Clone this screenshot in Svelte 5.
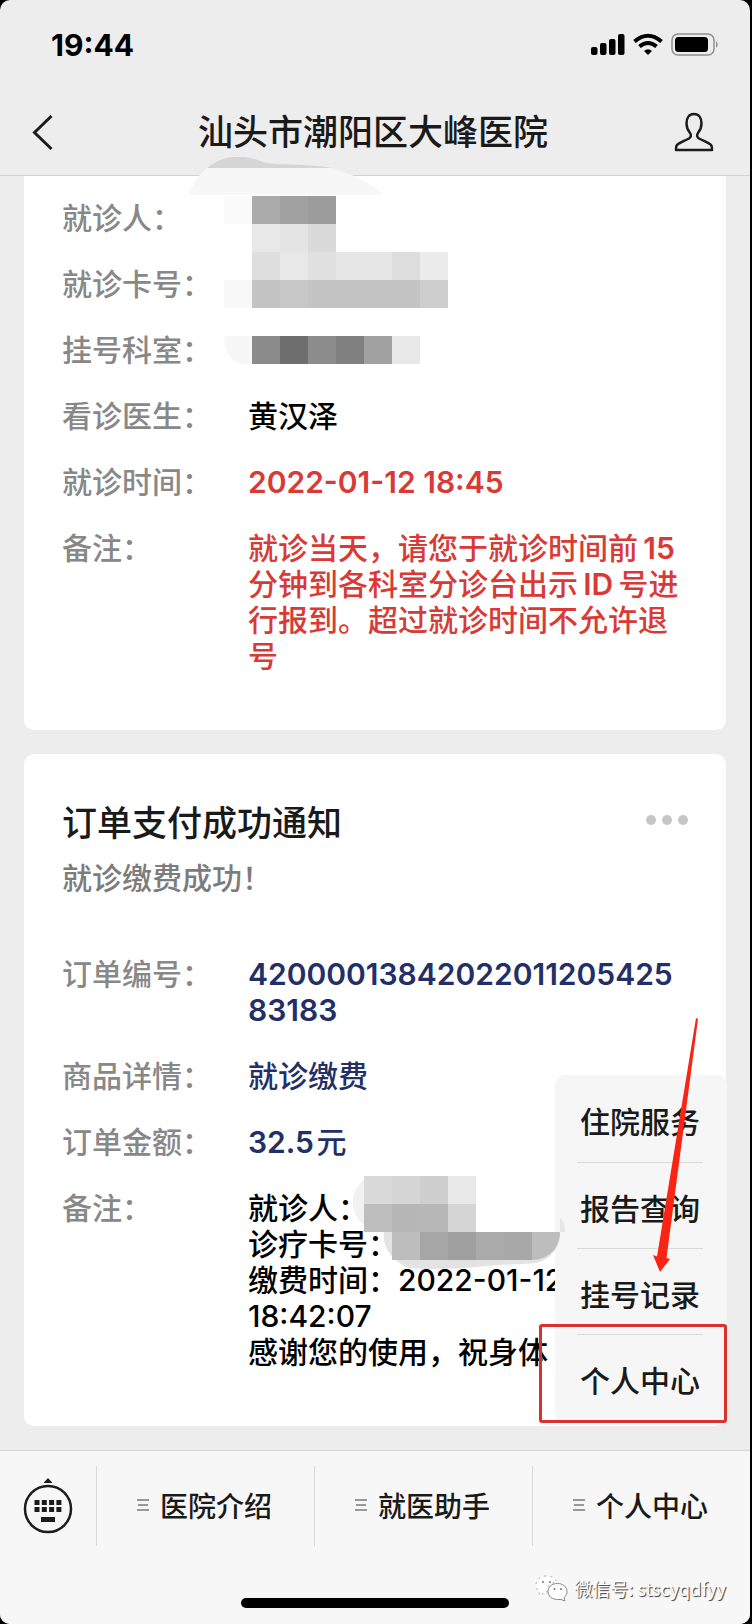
<script lang="ts">
  type Row = { label: string; lines?: string[]; tone?: string };

  const visit: Row[] = [
    { label: '就诊人：' },
    { label: '就诊卡号：' },
    { label: '挂号科室：' },
    { label: '看诊医生：', lines: ['黄汉泽'] },
    { label: '就诊时间：', lines: ['2022-01-12 18:45'], tone: 'red' },
    {
      label: '备注：',
      lines: [
        '就诊当天，请您于就诊时间前\u200915分钟到各科室分诊台出示\u2009ID\u2009号进行报到。超过就诊时间不允许退号'
      ],
      tone: 'red'
    }
  ];

  const order: Row[] = [
    { label: '订单编号：', lines: ['4200001384202201120542583183'], tone: 'navy' },
    { label: '商品详情：', lines: ['就诊缴费'], tone: 'navy' },
    { label: '订单金额：', lines: ['32.5\u200a元'], tone: 'navy' },
    {
      label: '备注：',
      lines: ['就诊人：', '诊疗卡号：', '缴费时间：2022-01-12', '18:42:07', '感谢您的使用，祝身体']
    }
  ];

  const submenu = ['住院服务', '报告查询', '挂号记录', '个人中心'];
  const tabs = ['医院介绍', '就医助手', '个人中心'];

  // Latin runs carry a heavier weight than the Chinese text around them.
  function runs(text: string) {
    return (text.match(/[\x21-\x7e]+(?: [\x21-\x7e]+)*|[^\x21-\x7e]+/g) ?? []).map((t) => ({
      t,
      latin: /^[\x21-\x7e]/.test(t)
    }));
  }

  const cells = (x: number, y: number, greys: string) =>
    greys.split(' ').map((g, i) => ({ x: x + i * 28, y, fill: '#' + g + g + g }));

  const visitMask = [
    ...cells(35, 39, 'fb ab a1 9c'),
    ...cells(63, 67, 'e8 e4 da'),
    ...cells(63, 95, 'de e8 e0 e6 e6 dd ec'),
    ...cells(35, 123, 'f8 c4 c7 c4 c3 c4 c4 ce'),
    ...cells(63, 179, '8b 6e 8c 80 a1 e8')
  ];

  const orderMask = [
    ...cells(28, 4, 'da d6 cf e8'),
    ...cells(28, 32, 'be b6 b7 d5'),
    ...cells(56, 60, 'bd a6 9f aa a8')
  ];
</script>

{#snippet rows(list: Row[])}
  <dl>
    {#each list as row}
      <div class="row">
        <dt>{row.label}</dt>
        <dd class={row.tone ?? ''}>
          {#each row.lines ?? [] as line}
            <span class="line">{#each runs(line) as r}{#if r.latin}<span class="num">{r.t}</span>{:else}{r.t}{/if}{/each}</span>
          {/each}
        </dd>
      </div>
    {/each}
  </dl>
{/snippet}

<div class="device">
  <div class="screen">
    <header>
      <div class="status">
        <time>19:44</time>
        <svg width="130" height="24" viewBox="0 0 130 24" aria-hidden="true">
          <rect x="1" y="14" width="6.500" height="8" rx="2" />
          <rect x="10" y="10" width="6.500" height="12" rx="2" />
          <rect x="19" y="6" width="6.500" height="16" rx="2" />
          <rect x="28" y="1" width="6.500" height="21" rx="2" />
          <g fill="none" stroke="#000" stroke-width="4">
            <path d="M44.5 8.5 Q58 -3 71.500 8.500" />
            <path d="M49.500 13.500 Q58 6.500 66.500 13.500" />
          </g>
          <path d="M54 18 Q58 14.500 62 18 L58 22 Z" />
          <rect x="82" y="1" width="42" height="21" rx="6" fill="none" stroke="#8e8e8e" stroke-width="1.500" />
          <rect x="85" y="4" width="33" height="15" rx="3.500" />
          <path d="M126 8 Q129.500 11.500 126 15 Z" fill="#8e8e8e" />
        </svg>
      </div>
      <nav>
        <button class="plain" aria-label="返回">
          <svg width="22" height="38" viewBox="0 0 22 38" aria-hidden="true">
            <path d="M19.500 3 L2.500 19.500 L19.500 36" fill="none" stroke="#1c1c1c" stroke-width="3" />
          </svg>
        </button>
        <h1>汕头市潮阳区大峰医院</h1>
        <button class="plain account" aria-label="账号">
          <svg width="40" height="40" viewBox="0 0 40 40" aria-hidden="true">
            <path
              d="M20 2 C15 2 12.500 6 12.500 11.500 C12.500 16 14 18.500 16 21 C17.500 23 17 25 15 26.500 C10.500 29 5.500 30.500 3 33 C1.800 34.200 2 36 2 38 H38 C38 36 38.200 34.200 37 33 C34.500 30.500 29.500 29 25 26.500 C23 25 22.500 23 24 21 C26 18.500 27.500 16 27.500 11.500 C27.500 6 25 2 20 2 Z"
              fill="none"
              stroke="#1c1c1c"
              stroke-width="2.500"
              stroke-linejoin="round"
            />
          </svg>
        </button>
      </nav>
    </header>

    <main>
      <article class="card first">
        {@render rows(visit)}
        <svg class="mask visit-mask" width="262" height="208" viewBox="0 0 262 208" aria-hidden="true">
          <path d="M18 11 C36 -4 58 -2 74 5 C86 9 118 6 143 11 Z" fill="#d5d5d5" />
          <path d="M0 38 C3 26 10 18 18 11 H143 C165 18 184 26 194 38 Z" fill="#f7f7f7" />
          {#each visitMask as c}
            <rect x={c.x} y={c.y} width="28" height="28" fill={c.fill} />
          {/each}
          <path d="M35 179 H63 V207 H52 C42 205 35 196 35 179 Z" fill="#f7f7f7" />
        </svg>
      </article>

      <article class="card second">
        <div class="head">
          <h2>订单支付成功通知</h2>
          <button class="plain more" aria-label="更多">
            <svg width="42" height="10" viewBox="0 0 42 10" fill="#c6c6c6" aria-hidden="true">
              <circle cx="5" cy="5" r="5" /><circle cx="21" cy="5" r="5" /><circle cx="37" cy="5" r="5" />
            </svg>
          </button>
        </div>
        <p>就诊缴费成功！</p>
        {@render rows(order)}
        <svg class="mask order-mask" width="230" height="100" viewBox="0 0 230 100" aria-hidden="true">
          <path d="M28 4 C20 6 14 16 16 28 C18 44 22 54 34 57 L48 59 H219 V4 Z" fill="#fff" />
          <path d="M28 8 C20 14 16 22 17 34 C20 48 26 54 38 58 L56 60 V32 H28 Z" fill="#f2f2f2" />
          <path d="M48 60 H56 V88 H84 L196 88 V60 H224 C225 76 214 88 200 91 C180 93 165 92 150 94 C125 97 95 98 72 96 C56 88 46 76 48 60 Z" fill="#e3e3e3" />
          {#each orderMask as c}
            <rect x={c.x} y={c.y} width="28" height="28" fill={c.fill} />
          {/each}
          <path d="M196 60 H224 C224 76 212 88 196 88 Z" fill="#bdbdbd" />
          <path d="M224 46 Q229 50 229 60 H224 Z" fill="#e6e6e6" />
        </svg>
      </article>
    </main>

    <footer>
      <div class="bar">
        <button class="plain keyboard" aria-label="键盘">
          <svg width="50" height="58" viewBox="0 0 50 58" fill="#1c1c1c" aria-hidden="true">
            <path d="M25 1 L29.500 6 H20.500 Z" />
            <circle cx="25" cy="32" r="23" fill="none" stroke="#1c1c1c" stroke-width="2.500" />
            {#each [0, 1] as r}
              {#each [0, 1, 2, 3] as c}
                <rect x={11.5 + c * 7.3} y={23 + r * 7} width="5" height="5" />
              {/each}
            {/each}
            <rect x="18" y="40" width="14" height="5" />
          </svg>
        </button>
        {#each tabs as tab}
          <button class="plain tab">
            <svg width="12" height="14" viewBox="0 0 12 14" aria-hidden="true">
              <path d="M0 2 H12 M1 7 H11 M0 12 H12" stroke="#999" stroke-width="2" />
            </svg>
            {tab}
          </button>
        {/each}
      </div>
      <div class="home"></div>

      <div class="watermark">
        <svg width="34" height="28" viewBox="0 0 34 28" aria-hidden="true">
          <path d="M11 2 C5 2 1 6 1 11 C1 14 2.500 16.500 5 18 L4 21.500 L8.500 19.500 H12 C11 12 16 8 22 8.500 C21 4.500 17 2 11 2 Z" fill="#fff" stroke="#999" stroke-width="0.800" stroke-dasharray="2 4" />
          <path d="M22.500 9.500 C16.500 9.500 13 13.500 13 17.500 C13 22 17 25.500 22.500 25.500 H26 L30 27 L29 23.500 C31 22 32 20 32 17.500 C32 13 28 9.500 22.500 9.500 Z" fill="#fff" stroke="#888" stroke-width="1" />
          <g fill="#777">
            <circle cx="8" cy="8" r="1" /><circle cx="15" cy="8" r="1" />
            <circle cx="19.500" cy="15" r="1" /><circle cx="26" cy="15" r="1" />
          </g>
        </svg>
        <span>微信号: stscyqdfyy</span>
      </div>

      <div class="popup">
        {#each submenu as item}
          <button class="plain">{item}</button>
        {/each}
        <div class="frame"></div>
        <svg class="arrow" width="50" height="258" viewBox="0 0 50 258" aria-hidden="true">
          <path d="M45 0 L47 1 L15.500 240 L19 241 L9 254 L2 237 L6 238.500 Z" fill="#fb2414" />
        </svg>
      </div>
    </footer>
  </div>
</div>

<style>
  :global(body) {
    margin: 0;
    background: #000;
  }

  .device {
    padding-right: 2px;
    background: #000;
    font-family: Inter, 'Noto Sans CJK SC', sans-serif;
    color: #1a1a1a;
  }

  .screen {
    display: flex;
    flex-direction: column;
    min-height: 100vh;
    overflow: hidden;
    border-radius: 10px;
    background: #ededed;
  }

  .plain {
    border: 0;
    padding: 0;
    background: none;
    color: inherit;
    font: inherit;
  }

  svg {
    display: block;
    flex: none;
  }

  header {
    border-bottom: 1px solid #d2d2d2;
  }

  .status {
    display: flex;
    align-items: center;
    justify-content: space-between;
    padding: 25px 30px 0 51px;
    height: 40px;
  }

  time {
    font-size: 30px;
    font-weight: 700;
    color: #000;
  }

  nav {
    display: grid;
    grid-template-columns: 1fr auto 1fr;
    align-items: center;
    padding: 24px 36px 0 32px;
    height: 86px;
  }

  .account {
    justify-self: end;
  }

  h1,
  h2 {
    margin: 0;
    font-size: 35px;
    line-height: 48px;
    font-weight: 500;
  }

  main {
    display: flex;
    flex: 1;
    flex-direction: column;
    gap: 24px;
    padding: 0 24px 24px;
  }

  .card {
    position: relative;
    padding: 45px 38px 56px;
    border-radius: 10px;
    background: #fff;
    font-size: 30px;
    line-height: 36px;
  }

  .first {
    padding-top: 24px;
    border-radius: 0 0 10px 10px;
  }

  .head {
    display: flex;
    justify-content: space-between;
    align-items: center;
  }

  .more {
    padding-bottom: 6px;
  }

  .second p {
    margin: 13px 0 60px;
    font-weight: 500;
    color: #7c7c7c;
  }

  dl {
    display: grid;
    gap: 30px;
    margin: 0;
  }

  .row {
    display: grid;
    grid-template-columns: 186px 1fr;
  }

  dt {
    font-weight: 500;
    color: #888;
    white-space: nowrap;
  }

  dd {
    margin: 0;
    min-width: 0;
    font-weight: 500;
    color: #000;
    word-break: break-all;
  }

  .red {
    color: #d93a36;
  }

  .navy {
    color: #232f66;
  }

  .line {
    display: block;
  }

  .red .num,
  .navy .num {
    font-weight: 600;
  }

  .mask {
    position: absolute;
  }

  .visit-mask {
    left: 165px;
    top: -19px;
  }

  .order-mask {
    z-index: 1;
    left: 312px;
    top: 418px;
  }

  footer {
    position: relative;
    border-top: 1px solid #d6d6d6;
    background: #f7f7f7;
  }

  .bar {
    display: grid;
    grid-template-columns: 96px 1fr 1fr 1fr;
    padding: 15px 0 52px;
    height: 80px;
  }

  .keyboard {
    display: grid;
    place-items: center;
  }

  .tab {
    display: flex;
    align-items: center;
    justify-content: center;
    gap: 11px;
    padding: 0 2px 2px 0;
    border-left: 1px solid #dadada;
    font-size: 28px;
    font-weight: 500;
  }

  .home {
    width: 268px;
    height: 10px;
    margin: 0 auto 16px;
    border-radius: 5px;
    background: #000;
  }

  .watermark {
    position: absolute;
    right: 24px;
    bottom: 22px;
    display: flex;
    align-items: center;
    gap: 5px;
    font-family: 'Noto Sans CJK SC', sans-serif;
    font-size: 18px;
    line-height: 28px;
    color: #fff;
    text-shadow: 1px 1px 1px #333;
  }

  .popup {
    position: absolute;
    right: 23px;
    bottom: calc(100% + 27px);
    display: flex;
    flex-direction: column;
    box-sizing: border-box;
    width: 172px;
    padding: 1px 24px 4px 22px;
    border-radius: 10px;
    background: #f6f6f6;
    font-size: 30px;
    font-weight: 500;
    line-height: 36px;
  }

  .popup button {
    height: 86px;
    padding-top: 6px;
    white-space: nowrap;
  }

  .popup button + button {
    border-top: 1px solid #d9d9d9;
  }

  .frame {
    position: absolute;
    right: 0;
    bottom: 1px;
    left: -16px;
    height: 93px;
    border: 3px solid #d9322d;
    border-radius: 3px;
  }

  .arrow {
    position: absolute;
    right: 26px;
    top: -57px;
  }
</style>
